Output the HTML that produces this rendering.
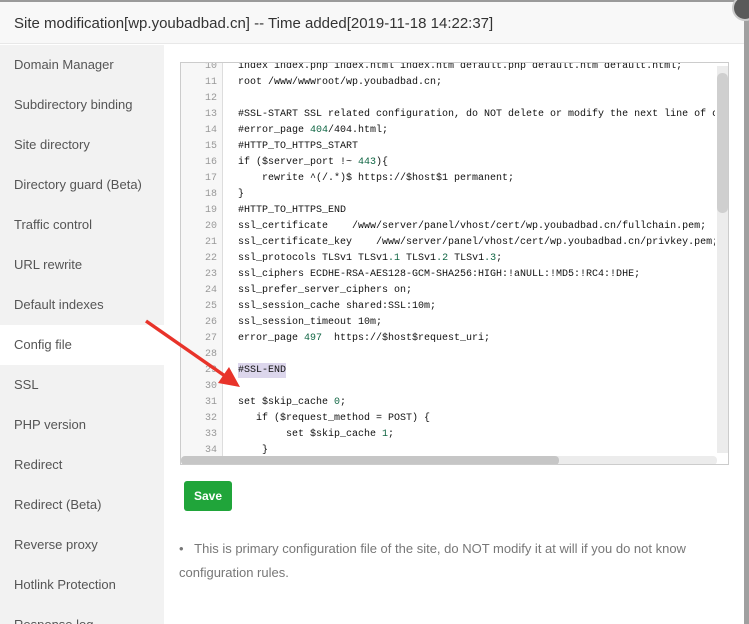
<!DOCTYPE html>
<html><head><meta charset="utf-8"><style>
*{margin:0;padding:0;box-sizing:border-box}
body{width:749px;height:624px;overflow:hidden;background:#fff;font-family:"Liberation Sans",sans-serif;position:relative}
.top{position:absolute;left:0;top:0;width:749px;height:2px;background:#9a9a9a}
.hdr{position:absolute;left:0;top:2px;width:744px;height:42px;background:#f8f8f8;border-bottom:1px solid #e8e8e8;font-size:15px;color:#333;line-height:44px;padding-left:14px}
.rs{position:absolute;left:744px;top:18px;width:5px;height:606px;background:#a0a0a0}
.close{position:absolute;left:732px;top:-5px;width:26px;height:26px;border-radius:50%;background:#5a5a5a;border:2px solid #ccc}
.side{position:absolute;left:0;top:45px;width:164px;height:579px;background:#f2f2f2;overflow:hidden}
.side div{height:40px;line-height:40px;padding-left:14px;font-size:13px;color:#555}
.side div.act{background:#fff}
.ed{position:absolute;left:180px;top:62px;width:549px;height:403px;border:1px solid #ccc;overflow:hidden;background:#fff}
.gut{position:absolute;left:0;top:0;width:42px;height:100%;background:#f7f7f7;border-right:1px solid #ddd}
.ln{position:absolute;left:0;width:36px;text-align:right;font:10px "Liberation Mono",monospace;color:#999}
.cl{position:absolute;left:57px;white-space:pre;font:10px "Liberation Mono",monospace;color:#111}
.n{color:#164}
.vs{position:absolute;left:536px;top:3px;width:11px;height:387px;background:#ececec}
.vt{position:absolute;left:536px;top:10px;width:11px;height:140px;background:#cfcfcf;border-radius:5px}
.hs{position:absolute;left:0;top:393px;width:536px;height:9px;background:#ececec;border-radius:4px}
.ht{position:absolute;left:0;top:393px;width:378px;height:9px;background:#c6c6c6;border-radius:4px}
.btn{position:absolute;left:184px;top:481px;width:48px;height:30px;background:#20a53a;border-radius:3px;color:#fff;font-size:12px;font-weight:bold;text-align:center;line-height:30px}
.note{position:absolute;left:179px;top:537px;width:545px;font-size:13px;color:#777;line-height:24px}
#c{position:absolute;left:181px;top:67px;width:534px;height:388px;overflow:hidden}
#c .ln,#c .cl{margin-top:-4px}
</style></head><body>
<div class="top"></div>
<div class="hdr">Site modification[wp.youbadbad.cn] -- Time added[2019-11-18 14:22:37]</div>
<div class="rs"></div>
<div class="close"></div>
<div class="side">
<div>Domain Manager</div><div>Subdirectory binding</div><div>Site directory</div><div>Directory guard (Beta)</div><div>Traffic control</div><div>URL rewrite</div><div>Default indexes</div><div class="act">Config file</div><div>SSL</div><div>PHP version</div><div>Redirect</div><div>Redirect (Beta)</div><div>Reverse proxy</div><div>Hotlink Protection</div><div>Response log</div>
</div>
<div class="ed">
<div class="gut"></div>
<div class="vs"></div><div class="vt"></div>
<div class="hs"></div><div class="ht"></div>
</div>
<div style="position:absolute;left:181px;top:63px;width:534px;height:392px;overflow:hidden">
<div style="position:absolute;left:0;top:4px;width:534px;height:392px">
<div class="ln" style="top:-6px">10</div><div class="cl" style="top:-6px">index index.php index.html index.htm default.php default.htm default.html;</div>
<div class="ln" style="top:10px">11</div><div class="cl" style="top:10px">root /www/wwwroot/wp.youbadbad.cn;</div>
<div class="ln" style="top:26px">12</div>
<div class="ln" style="top:42px">13</div><div class="cl" style="top:42px">#SSL-START SSL related configuration, do NOT delete or modify the next line of commented-out 404 redirect rule</div>
<div class="ln" style="top:58px">14</div><div class="cl" style="top:58px">#error_page <span class="n">404</span>/404.html;</div>
<div class="ln" style="top:74px">15</div><div class="cl" style="top:74px">#HTTP_TO_HTTPS_START</div>
<div class="ln" style="top:90px">16</div><div class="cl" style="top:90px">if ($server_port !~ <span class="n">443</span>){</div>
<div class="ln" style="top:106px">17</div><div class="cl" style="top:106px">    rewrite ^(/.*)$ https://$host$1 permanent;</div>
<div class="ln" style="top:122px">18</div><div class="cl" style="top:122px">}</div>
<div class="ln" style="top:138px">19</div><div class="cl" style="top:138px">#HTTP_TO_HTTPS_END</div>
<div class="ln" style="top:154px">20</div><div class="cl" style="top:154px">ssl_certificate    /www/server/panel/vhost/cert/wp.youbadbad.cn/fullchain.pem;</div>
<div class="ln" style="top:170px">21</div><div class="cl" style="top:170px">ssl_certificate_key    /www/server/panel/vhost/cert/wp.youbadbad.cn/privkey.pem;</div>
<div class="ln" style="top:186px">22</div><div class="cl" style="top:186px">ssl_protocols TLSv1 TLSv1<span class="n">.1</span> TLSv1<span class="n">.2</span> TLSv1<span class="n">.3</span>;</div>
<div class="ln" style="top:202px">23</div><div class="cl" style="top:202px">ssl_ciphers ECDHE-RSA-AES128-GCM-SHA256:HIGH:!aNULL:!MD5:!RC4:!DHE;</div>
<div class="ln" style="top:218px">24</div><div class="cl" style="top:218px">ssl_prefer_server_ciphers on;</div>
<div class="ln" style="top:234px">25</div><div class="cl" style="top:234px">ssl_session_cache shared:SSL:10m;</div>
<div class="ln" style="top:250px">26</div><div class="cl" style="top:250px">ssl_session_timeout 10m;</div>
<div class="ln" style="top:266px">27</div><div class="cl" style="top:266px">error_page <span class="n">497</span>  https://$host$request_uri;</div>
<div class="ln" style="top:282px">28</div>
<div class="ln" style="top:298px">29</div><div class="cl" style="top:296px;background:#dcd6ec;padding:2px 0">#SSL-END</div>
<div class="ln" style="top:314px">30</div>
<div class="ln" style="top:330px">31</div><div class="cl" style="top:330px">set $skip_cache <span class="n">0</span>;</div>
<div class="ln" style="top:346px">32</div><div class="cl" style="top:346px">   if ($request_method = POST) {</div>
<div class="ln" style="top:362px">33</div><div class="cl" style="top:362px">        set $skip_cache <span class="n">1</span>;</div>
<div class="ln" style="top:378px">34</div><div class="cl" style="top:378px">    }</div>
</div>
</div>
<div class="btn">Save</div>
<div class="note">•&nbsp;&nbsp; This is primary configuration file of the site, do NOT modify it at will if you do not know configuration rules.</div>
<svg style="position:absolute;left:0;top:0;pointer-events:none" width="749" height="624"><line x1="146" y1="321" x2="225" y2="376" stroke="#e8332a" stroke-width="3.5"/><polygon points="240,387 218,383 229,367" fill="#e8332a"/></svg>
</body></html>
